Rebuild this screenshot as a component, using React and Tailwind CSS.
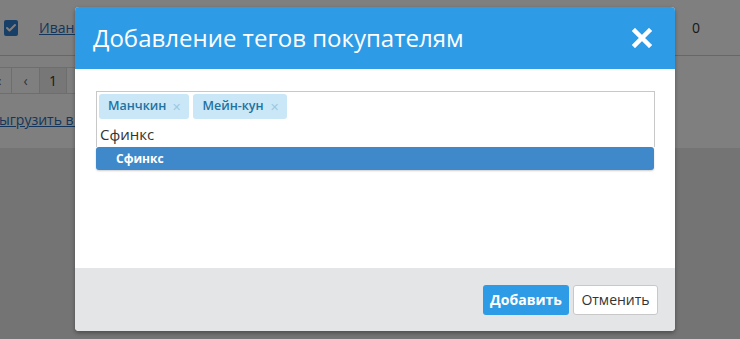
import { Check } from 'lucide-react';

const font = { fontFamily: '"Open Sans", "Noto Sans", sans-serif' };

// Tag chip inside the tag input
const Tag = ({ label }) => (
  <span className="inline-flex h-[25px] items-center gap-[6px] rounded-[3px] bg-[#c9e7f7] pl-[9px] pr-[8px] text-[12.5px] font-semibold text-[#22729f]">
    {label}
    <span className="text-[11px] font-normal leading-none text-[#9cc9e4]">✕</span>
  </span>
);

export default function App() {
  return (
    <div className="relative h-[339px] w-[740px] overflow-hidden bg-[#e8e8e8]" style={font}>
      {/* page behind the overlay */}
      <div className="h-[148px] bg-white">
        <div className="flex h-[56px] items-center border-b border-[#cfcfcf]">
          <span className="ml-[4px] flex h-[16px] w-[14px] items-center justify-center rounded-[2px] bg-[#2f7fd0]">
            <Check className="h-[12px] w-[12px] text-white" strokeWidth={4} />
          </span>
          <span className="ml-[21px] text-[14px] text-[#2a6db5] underline">Иванов Иван</span>
          <span className="ml-auto mr-[40px] text-[14px] text-[#333]">0</span>
        </div>
        <div className="mt-[11px] flex h-[27px] text-[14px] text-[#666]">
          <span className="ml-[-16px] flex w-[28px] items-center justify-center border border-[#ddd]">«</span>
          <span className="flex w-[28px] items-center justify-center border border-l-0 border-[#ddd]">‹</span>
          <span className="flex w-[27px] items-center justify-center border border-l-0 border-[#ddd] bg-[#eee] text-[#333]">1</span>
          <span className="flex w-[28px] items-center justify-center border border-l-0 border-[#ddd]">›</span>
        </div>
        <div className="ml-[-10px] mt-[15px] text-[14px] text-[#2a6db5] underline">Выгрузить в CSV</div>
      </div>

      {/* overlay */}
      <div className="absolute inset-0 bg-black/50" />

      {/* modal */}
      <div className="absolute left-[75px] top-[7px] flex h-[324px] w-[600px] flex-col overflow-hidden rounded-[4px] bg-white shadow-[0_2px_4px_rgba(0,0,0,0.35)]">
        <div className="flex h-[62px] items-center justify-between bg-[#2e9be7] pl-[18px] pr-[23px]">
          <h2 className="text-[24px] font-normal text-white">Добавление тегов покупателям</h2>
          <svg width="20" height="20" viewBox="0 0 20 20">
            <path d="M3 3 L17 17 M17 3 L3 17" stroke="white" strokeWidth="4.5" strokeLinecap="square" />
          </svg>
        </div>

        <div className="flex-1 pl-[21px] pr-[20px] pt-[22px]">
          <div className="border border-b-0 border-[#c8c8c8] px-[2px] pt-[2px]">
            <div className="flex gap-[4px]">
              <Tag label="Манчкин" />
              <Tag label="Мейн-кун" />
            </div>
            <div className="h-[28px] pl-[1px] pt-[4px] text-[15px] leading-[22px] text-[#333]">Сфинкс</div>
          </div>
          <div className="mr-[1px] flex h-[23px] items-center rounded-[3px] bg-[#3f88ca] pl-[20px] text-[12px] font-bold text-white shadow-[0_1px_2px_rgba(0,0,0,0.2)]">
            Сфинкс
          </div>
        </div>

        <div className="flex h-[63px] items-center justify-end gap-[4px] bg-[#e4e5e7] pr-[17px]">
          <button className="h-[30px] w-[86px] rounded-[3px] bg-[#2e9be7] text-[14px] font-bold text-white">Добавить</button>
          <button className="h-[30px] w-[85px] rounded-[3px] border border-[#c8c8c8] bg-white text-[14px] text-[#333]">Отменить</button>
        </div>
      </div>
    </div>
  );
}
